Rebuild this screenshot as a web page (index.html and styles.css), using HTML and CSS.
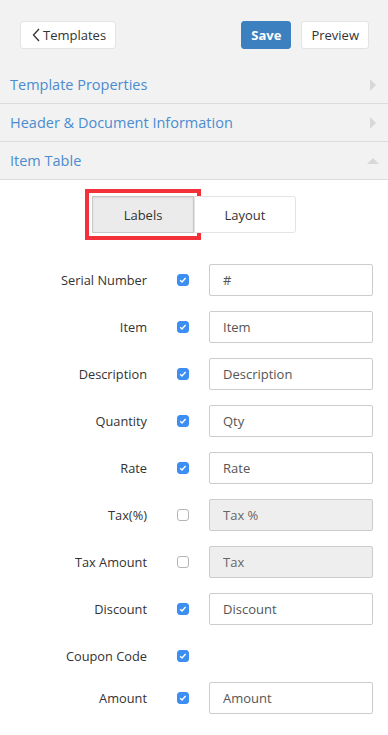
FILE: index.html
```html
<!DOCTYPE html>
<html lang="en-US">
<head>
<meta charset="utf-8">
<meta name="viewport" content="width=device-width, initial-scale=1">
<title>Item Table Labels</title>
<link rel="stylesheet" href="styles.css">
</head>
<body>

<div class="top">
  <div class="toolbar">
    <button class="btn back" type="button">
      <svg width="8" height="14" viewBox="0 0 8 14"><path d="M7 1 L1.5 7 L7 13" fill="none" stroke="#333" stroke-width="1.3"/></svg>Templates
    </button>
    <div class="actions">
      <button class="btn save" type="button">Save</button>
      <button class="btn" type="button">Preview</button>
    </div>
  </div>

  <div class="section">
    <span>Template Properties</span>
    <span class="arrow right"></span>
  </div>
  <div class="section">
    <span>Header &amp; Document Information</span>
    <span class="arrow right"></span>
  </div>
  <div class="section">
    <span>Item Table</span>
    <span class="arrow up"></span>
  </div>
</div>

<div class="panel">
  <div class="tabs">
    <button class="tab active" type="button">Labels</button>
    <button class="tab" type="button">Layout</button>
  </div>

  <div class="fields">
    <div class="row">
      <label>Serial Number</label>
      <input type="checkbox" checked>
      <input class="text" type="text" value="#">
    </div>
    <div class="row">
      <label>Item</label>
      <input type="checkbox" checked>
      <input class="text" type="text" value="Item">
    </div>
    <div class="row">
      <label>Description</label>
      <input type="checkbox" checked>
      <input class="text" type="text" value="Description">
    </div>
    <div class="row">
      <label>Quantity</label>
      <input type="checkbox" checked>
      <input class="text" type="text" value="Qty">
    </div>
    <div class="row">
      <label>Rate</label>
      <input type="checkbox" checked>
      <input class="text" type="text" value="Rate">
    </div>
    <div class="row">
      <label>Tax(%)</label>
      <input type="checkbox">
      <input class="text" type="text" value="Tax %" disabled>
    </div>
    <div class="row">
      <label>Tax Amount</label>
      <input type="checkbox">
      <input class="text" type="text" value="Tax" disabled>
    </div>
    <div class="row">
      <label>Discount</label>
      <input type="checkbox" checked>
      <input class="text" type="text" value="Discount">
    </div>
    <div class="row short">
      <label>Coupon Code</label>
      <input type="checkbox" checked>
    </div>
    <div class="row">
      <label>Amount</label>
      <input type="checkbox" checked>
      <input class="text" type="text" value="Amount">
    </div>
  </div>
</div>

</body>
</html>
```

FILE: styles.css
```css
body {
  margin: 0;
  background: #fff;
  font-family: "Open Sans", Lato, sans-serif;
  font-size: 12.8px;
  color: #333;
}
button {
  font-family: inherit;
}
.top {
  background: #f2f2f2;
}
.toolbar {
  display: flex;
  justify-content: space-between;
  padding: 21px 19px 17px 20px;
}
.actions {
  display: flex;
  gap: 10px;
}
.btn {
  display: flex;
  align-items: center;
  height: 28px;
  padding: 0 9px;
  font-size: 13px;
  color: #333;
  background: #fff;
  border: 1px solid #e3e3e3;
  border-radius: 3px;
}
.btn.back {
  padding: 0 9px 0 11px;
}
.btn.back svg {
  margin-right: 3px;
}
.btn.save {
  width: 50px;
  justify-content: center;
  font-weight: 700;
  color: #fff;
  background: #3d80c0;
  border-color: #3d80c0;
}
.section {
  display: flex;
  align-items: center;
  justify-content: space-between;
  height: 37px;
  padding: 0 9px 0 10px;
  font-size: 14.5px;
  color: #4a8ccf;
  border-bottom: 1px solid #dcdcdc;
}
.arrow {
  width: 0;
  height: 0;
  border: 6px solid transparent;
}
.arrow.right {
  margin-right: 3px;
  border-left-color: #d8d8d8;
  border-right-width: 0;
}
.arrow.up {
  border-bottom-color: #d8d8d8;
  border-top-width: 0;
}
.panel {
  padding: 16px 15px 20px 0;
}
.tabs {
  display: flex;
  justify-content: center;
  padding-left: 15px;
}
.tab {
  width: 102px;
  height: 37px;
  font-size: 13px;
  color: #333;
  background: #fff;
  border: 1px solid #e3e3e3;
  border-radius: 0 3px 3px 0;
}
.tab.active {
  background: #ebebeb;
  border-color: #c8c8c8;
  border-radius: 0;
  box-shadow: inset 0 1px 2px rgba(0,0,0,0.08), 0 0 0 3px #fff, 0 0 0 7px #f3313a;
}
.fields {
  margin-top: 31px;
}
.row {
  display: grid;
  grid-template-columns: 147px 12px 164px;
  column-gap: 30px;
  align-items: center;
  min-height: 32px;
  margin-bottom: 15px;
}
.row label {
  text-align: right;
}
.row.short {
  margin-bottom: 10px;
}
input[type=checkbox] {
  -webkit-appearance: none;
  appearance: none;
  width: 12px;
  height: 12px;
  margin: 0;
  border: 1px solid #b5b5b5;
  border-radius: 3px;
  background: #fff;
}
input[type=checkbox]:checked {
  border-color: #3c8ef3;
  background: #3c8ef3 url("data:image/svg+xml,%3Csvg xmlns='http://www.w3.org/2000/svg' width='12' height='12'%3E%3Cpath d='M3.2 6.3 L5 8 L8.6 4' fill='none' stroke='%23fff' stroke-width='1.4'/%3E%3C/svg%3E") center / 12px no-repeat;
}
.row input.text {
  grid-column: 3;
  margin-left: -10px;
  width: 164px;
  height: 32px;
  box-sizing: border-box;
  padding: 0 13px;
  font-family: inherit;
  font-size: 13px;
  color: #555;
  border: 1px solid #ccc;
  border-radius: 2px;
  outline: none;
}
.row input.text:disabled {
  background: #eee;
  color: #666;
}
```
